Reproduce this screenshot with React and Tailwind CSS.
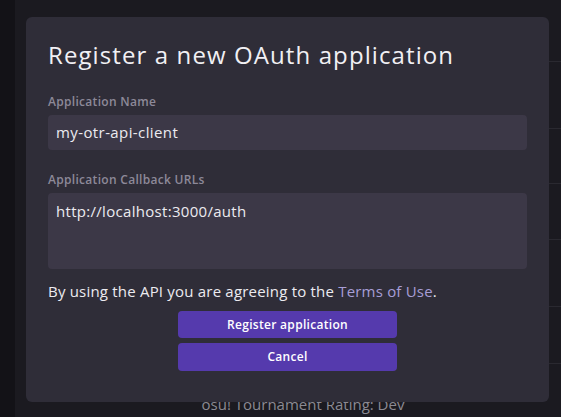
import React from "react";

const lines = [61, 128, 183, 239, 306, 363];

export default function App() {
  return (
    <div className="relative w-[561px] h-[417px] overflow-hidden bg-[#1b1a20] font-['Open_Sans',sans-serif]">
      {/* page behind the dialog */}
      <div className="absolute left-0 top-0 h-full w-[15px] bg-[#131217]" />
      {lines.map((y) => (
        <div
          key={y}
          className="absolute left-[540px] right-0 h-px bg-[#2a2930]"
          style={{ top: y }}
        />
      ))}
      <p className="absolute left-0 w-[606px] top-[393px] text-center text-[15px] text-[#8b8a93]">
        osu! Tournament Rating: Dev
      </p>

      {/* dialog */}
      <div className="absolute left-[26px] top-[17px] w-[523px] h-[385px] rounded-md bg-[#2f2d38] px-[22px] pt-[22px] flex flex-col">
        <h1 className="text-[24px] leading-[32px] tracking-[1.1px] text-[#f1f0f4]">
          Register a new OAuth application
        </h1>

        <label className="mt-[23px] text-[12px] leading-[16px] tracking-[0.3px] font-semibold text-[#8d8999]">
          Application Name
        </label>
        <div className="mt-[5px] h-[35px] rounded bg-[#3c3847] px-[8px] flex items-center text-[15px] tracking-[0.4px] text-[#ecebf0]">
          my-otr-api-client
        </div>

        <label className="mt-[22px] text-[12px] leading-[16px] tracking-[0.3px] font-semibold text-[#8d8999]">
          Application Callback URLs
        </label>
        <div className="mt-[5px] h-[76px] rounded bg-[#3c3847] px-[8px] pt-[9px] text-[15px] leading-[18px] tracking-[0.3px] text-[#ecebf0]">
          http://localhost:3000/auth
        </div>

        <p className="mt-[13px] text-[15px] leading-[18px] tracking-[0.2px] text-[#ecebf0]">
          By using the API you are agreeing to the{" "}
          <span className="text-[#a79ed6]">Terms of Use</span>.
        </p>

        <div className="mt-[11px] flex flex-col items-center gap-[5px]">
          <button className="w-[219px] h-[27px] rounded bg-[#553aad] text-[12px] tracking-[0.3px] font-semibold text-white">
            Register application
          </button>
          <button className="w-[219px] h-[28px] rounded bg-[#553aad] text-[12px] tracking-[0.3px] font-semibold text-white">
            Cancel
          </button>
        </div>
      </div>
    </div>
  );
}
